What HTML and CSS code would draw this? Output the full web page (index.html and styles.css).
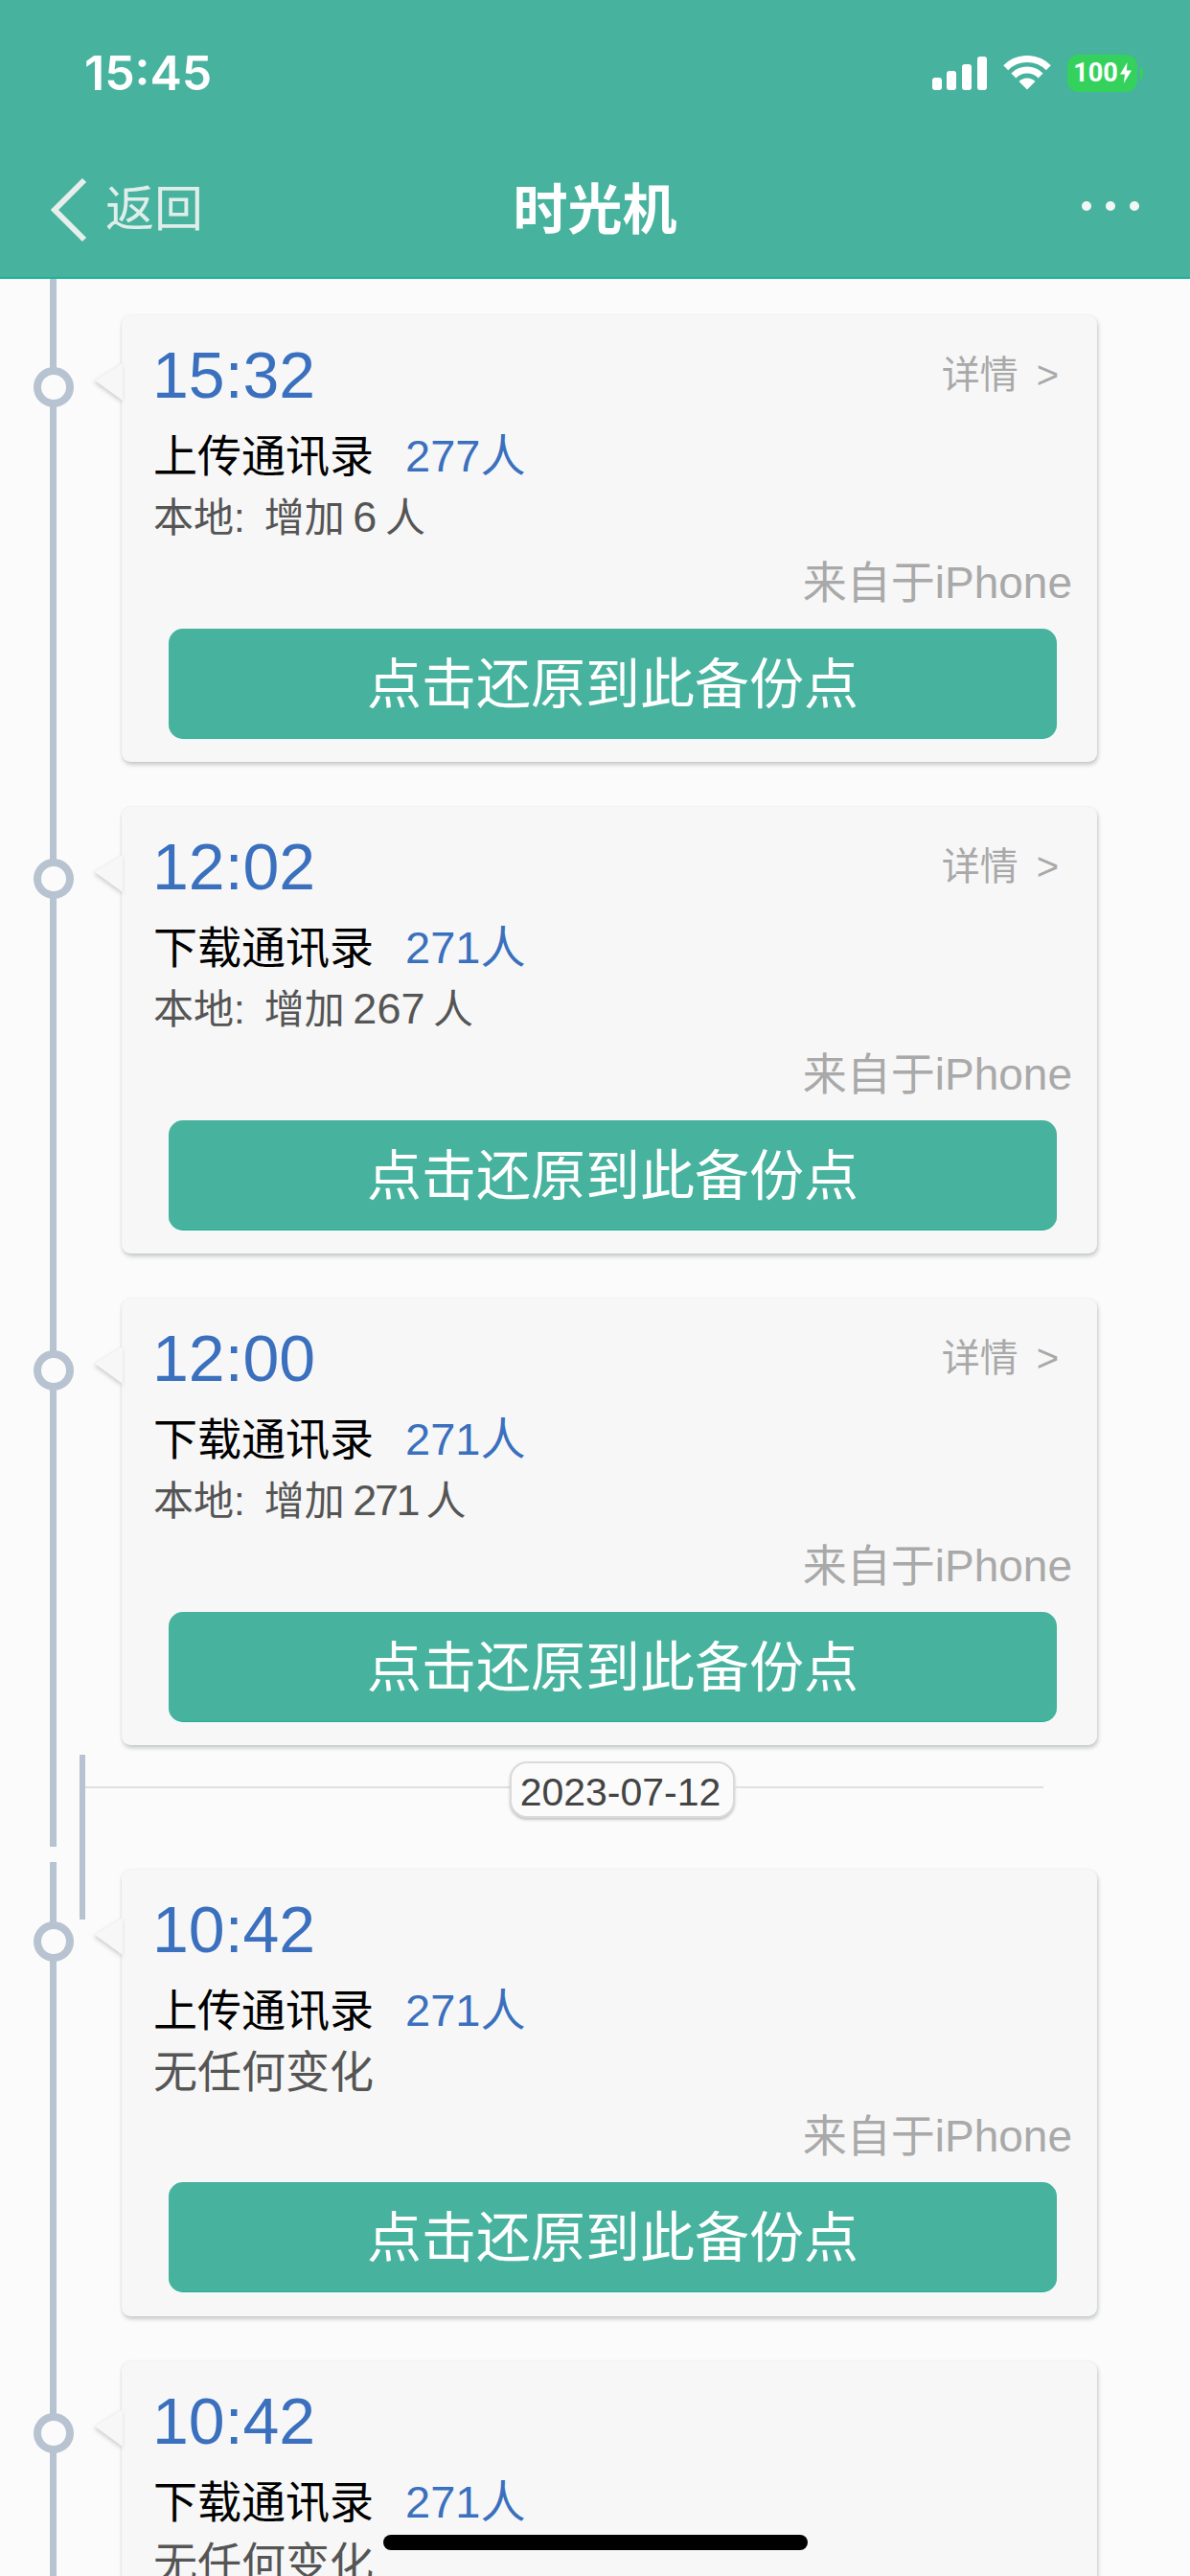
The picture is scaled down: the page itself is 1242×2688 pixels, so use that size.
FILE: index.html
```html
<!DOCTYPE html>
<html lang="zh-CN">
<head>
<meta charset="utf-8">
<title>时光机</title>
<link rel="stylesheet" href="styles.css">
</head>
<body>
<div class="screen">
  <header class="topbar">
    <div class="status">
      <span class="clock">15:45</span>
      <div class="status-icons">
        <svg class="signal" width="57" height="35" viewBox="0 0 57 35"><rect x="0" y="22" width="10" height="13" rx="3"/><rect x="15" y="15" width="10" height="20" rx="3"/><rect x="31" y="8" width="10" height="27" rx="3"/><rect x="47" y="0" width="10" height="35" rx="3"/></svg>
        <svg class="wifi" width="50" height="36" viewBox="0 0 50 36"><path d="M2.7 12.7A31.5 31.5 0 0 1 47.3 12.7M10.9 20.9A20 20 0 0 1 39.1 20.9" fill="none" stroke="#fff" stroke-width="7"/><path d="M25 35.5L16.5 27A12 12 0 0 1 33.5 27Z" fill="#fff"/></svg>
        <div class="battery"><span class="battery-level">100</span><svg class="bolt" width="12" height="22" viewBox="0 0 12 22"><path d="M7.5 0L0 12.5H5L3.8 22L12 8.5H6.8Z" fill="#fff"/></svg></div>
      </div>
    </div>
    <nav class="navbar">
      <div class="back">
        <svg width="38" height="68" viewBox="0 0 38 68"><path d="M35 3L4 34L35 65" fill="none" stroke="#e6efec" stroke-width="6"/></svg>
        <span class="back-label">返回</span>
      </div>
      <h1 class="title">时光机</h1>
      <div class="more"><i class="dot"></i><i class="dot"></i><i class="dot"></i></div>
    </nav>
  </header>

  <main class="timeline">
    <section class="group">
      <article class="card">
        <span class="node"></span>
        <svg class="pointer" width="31" height="41" viewBox="0 0 31 41"><path d="M31 1L2 19L31 40Z" fill="#f7f7f7"/></svg>
        <div class="card-head"><span class="time">15:32</span><span class="detail-link">详情<span class="chev">&gt;</span></span></div>
        <p class="action">上传通讯录<span class="count">277人</span></p>
        <p class="change">本地<span class="colon">:</span>增加 <span class="num">6</span> 人</p>
        <p class="source">来自于iPhone</p>
        <button class="restore">点击还原到此备份点</button>
      </article>
      <article class="card">
        <span class="node"></span>
        <svg class="pointer" width="31" height="41" viewBox="0 0 31 41"><path d="M31 1L2 19L31 40Z" fill="#f7f7f7"/></svg>
        <div class="card-head"><span class="time">12:02</span><span class="detail-link">详情<span class="chev">&gt;</span></span></div>
        <p class="action">下载通讯录<span class="count">271人</span></p>
        <p class="change">本地<span class="colon">:</span>增加 <span class="num">267</span> 人</p>
        <p class="source">来自于iPhone</p>
        <button class="restore">点击还原到此备份点</button>
      </article>
      <article class="card">
        <span class="node"></span>
        <svg class="pointer" width="31" height="41" viewBox="0 0 31 41"><path d="M31 1L2 19L31 40Z" fill="#f7f7f7"/></svg>
        <div class="card-head"><span class="time">12:00</span><span class="detail-link">详情<span class="chev">&gt;</span></span></div>
        <p class="action">下载通讯录<span class="count">271人</span></p>
        <p class="change">本地<span class="colon">:</span>增加 <span class="num num-narrow">271</span> 人</p>
        <p class="source">来自于iPhone</p>
        <button class="restore">点击还原到此备份点</button>
      </article>
      <div class="date-row">
        <span class="rule rule-left"></span>
        <span class="date-pill">2023-07-12</span>
        <span class="rule rule-right"></span>
      </div>
    </section>
    <section class="group group-next">
      <article class="card">
        <span class="node"></span>
        <svg class="pointer" width="31" height="41" viewBox="0 0 31 41"><path d="M31 1L2 19L31 40Z" fill="#f7f7f7"/></svg>
        <div class="card-head"><span class="time">10:42</span></div>
        <p class="action">上传通讯录<span class="count">271人</span></p>
        <p class="change change-none">无任何变化</p>
        <p class="source">来自于iPhone</p>
        <button class="restore">点击还原到此备份点</button>
      </article>
      <article class="card">
        <span class="node"></span>
        <svg class="pointer" width="31" height="41" viewBox="0 0 31 41"><path d="M31 1L2 19L31 40Z" fill="#f7f7f7"/></svg>
        <div class="card-head"><span class="time">10:42</span></div>
        <p class="action">下载通讯录<span class="count">271人</span></p>
        <p class="change change-none">无任何变化</p>
        <p class="source">来自于iPhone</p>
        <button class="restore">点击还原到此备份点</button>
      </article>
    </section>
  </main>
  <div class="home-indicator"></div>
</div>
</body>
</html>
```
FILE: styles.css
```css
* { box-sizing: border-box; }
html, body { margin: 0; padding: 0; }
body {
  font-family: "Liberation Sans", "Noto Sans CJK SC", sans-serif;
  background: #fbfbfb;
}
.screen {
  position: relative;
  width: 1242px;
  height: 2688px;
  overflow: hidden;
  background: #fbfbfb;
}

/* Top bar */
.topbar {
  height: 291px;
  background: #47b29d;
  border-bottom: 2px solid #1fb296;
  color: #fff;
}
.status {
  display: flex;
  justify-content: space-between;
  align-items: center;
  height: 114px;
  padding: 38px 55px 0 88px;
}
.clock {
  font-family: Inter, "Liberation Sans", sans-serif;
  font-size: 50px;
  font-weight: 600;
  line-height: 56px;
}
.status-icons {
  display: flex;
  align-items: center;
  gap: 17px;
}
.signal { fill: #fff; }
.battery {
  position: relative;
  display: flex;
  align-items: center;
  justify-content: center;
  gap: 2px;
  width: 73px;
  height: 39px;
  border-radius: 12px;
  background: #34d25c;
}
.battery::after {
  content: "";
  position: absolute;
  right: -6px;
  top: 13px;
  width: 3px;
  height: 13px;
  border-radius: 0 3px 3px 0;
  background: #34d25c;
}
.battery-level {
  font-family: Roboto, sans-serif;
  font-size: 27px;
  font-weight: 700;
  line-height: 30px;
  color: #fff;
}
.navbar {
  display: grid;
  grid-template-columns: 1fr auto 1fr;
  align-items: center;
  height: 100px;
  margin-top: 55px;
  padding: 0 53px;
}
.back {
  display: flex;
  align-items: center;
  gap: 19px;
}
.back-label {
  font-size: 51px;
  line-height: 60px;
  color: #dfeeea;
}
.title {
  margin: 0;
  font-size: 57px;
  font-weight: 700;
  line-height: 66px;
  color: #fff;
}
.more {
  display: flex;
  justify-content: flex-end;
  gap: 15px;
  margin-top: -8px;
}
.dot {
  width: 10px;
  height: 10px;
  border-radius: 50%;
  background: #f2f7f6;
}

/* Timeline */
.group {
  position: relative;
  padding-top: 38px;
}
.group::before {
  content: "";
  position: absolute;
  left: 52px;
  top: 0;
  bottom: 0;
  width: 7px;
  background: #b7c3d0;
}
.group-next {
  margin-top: 16px;
  padding-top: 8px;
}
.card {
  position: relative;
  width: 1018px;
  height: 466px;
  margin: 0 0 47px 127px;
  padding: 28px 26px 24px 33px;
  border-radius: 9px;
  background: #f7f7f7;
  box-shadow: 1px 3px 4px rgba(70, 80, 85, 0.28), 0 0 3px rgba(0, 0, 0, 0.07);
}
.node {
  position: absolute;
  left: -92px;
  top: 54px;
  width: 42px;
  height: 42px;
  border: 8px solid #b7c3d0;
  border-radius: 50%;
  background: #fbfbfb;
}
.pointer {
  position: absolute;
  left: -30px;
  top: 49px;
  overflow: visible;
  filter: drop-shadow(-1px 2px 2px rgba(70, 80, 85, 0.26));
}
.card-head {
  display: flex;
  justify-content: space-between;
  align-items: center;
  height: 68px;
}
.time {
  margin-left: -1px;
  font-size: 68px;
  line-height: 68px;
  color: #3a70be;
}
.detail-link {
  margin-right: 14px;
  font-size: 40px;
  line-height: 50px;
  color: #a9a9a9;
}
.chev { margin-left: 19px; }
.action {
  margin: 26px 0 0;
  font-size: 46px;
  line-height: 50px;
  color: #000;
}
.count {
  margin-left: 33px;
  font-size: 47px;
  color: #3a70be;
}
.change {
  margin: 16px 0 0;
  font-size: 42px;
  line-height: 46px;
  word-spacing: -3px;
  color: #555;
}
.change-none { font-size: 46px; }
.num { font-size: 45px; }
.num-narrow { letter-spacing: -2.5px; }
.colon { margin-right: 20px; }
.source {
  margin: 19px 0 0;
  font-size: 46px;
  line-height: 50px;
  text-align: right;
  color: #a9a9a9;
}
.restore {
  display: block;
  width: 927px;
  height: 115px;
  margin: 23px 0 0 16px;
  padding: 2px 0 0;
  border: 0;
  border-bottom: 1px solid #1fb296;
  border-radius: 15px;
  background: #47b29d;
  font-family: inherit;
  font-size: 57px;
  line-height: 110px;
  color: #fff;
}

/* Date separator */
.date-row {
  position: relative;
  display: flex;
  align-items: center;
  height: 106px;
  margin-top: -47px;
  padding: 17px 0 30px 89px;
}
.date-row::before {
  content: "";
  position: absolute;
  left: 83px;
  top: 10px;
  width: 6px;
  height: 172px;
  background: #b7c3d0;
  z-index: 2;
}
.rule {
  height: 2px;
  margin-bottom: 5px;
  background: #dde2e0;
}
.rule-left { width: 443px; }
.rule-right { width: 322px; }
.date-pill {
  width: 235px;
  height: 59px;
  padding: 5px 4px 0 0;
  border: 2px solid #d9dbda;
  border-radius: 18px;
  background: #fbfbfb;
  box-shadow: 0 2px 3px rgba(0, 0, 0, 0.22);
  font-size: 41px;
  line-height: 50px;
  text-align: center;
  color: #444;
}

/* Home indicator */
.home-indicator {
  position: absolute;
  left: 400px;
  top: 2645px;
  width: 443px;
  height: 16px;
  border-radius: 8px;
  background: #000;
}
```
